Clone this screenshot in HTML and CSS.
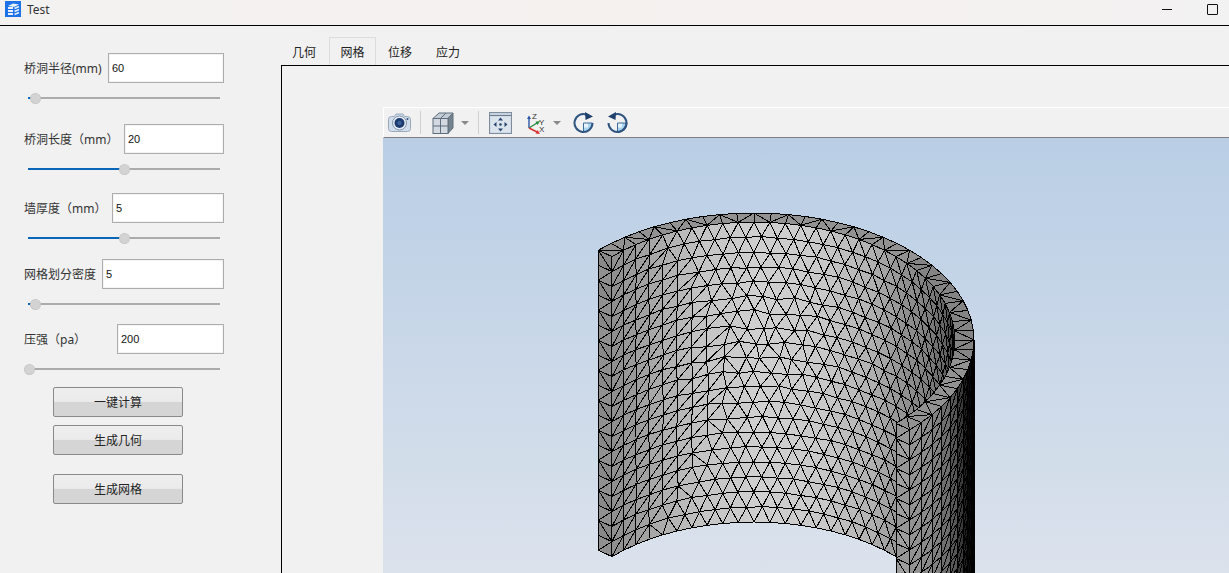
FILE: index.html
```html
<!DOCTYPE html>
<html lang="zh">
<head>
<meta charset="utf-8">
<title>Test</title>
<link rel="stylesheet" href="styles.css">
</head>
<body>
<div class="app">
  <header class="titlebar">
    <svg class="app-icon" viewBox="0 0 16 16">
      <rect width="16" height="16" fill="#1c72e6"/>
      <path d="M3 5 L8 2.5 L14 3.5 L9 6 Z M3 6 h5 v2 h-5 Z M3 9 h5 v2 h-5 Z M3 12 h5 v2 h-5 Z" fill="#e8f0fc"/>
      <path d="M9.5 7.5 L14 5.5 M9.5 10.5 L14 8.5 M9.5 13.5 L14 11.5" stroke="#e8f0fc" stroke-width="1.4" fill="none"/>
    </svg>
    <span class="app-title">Test</span>
    <span class="win-min"></span>
    <span class="win-max"></span>
  </header>
  <div class="workspace">
    <aside class="panel">
      <div class="field">
        <div class="field-row"><label>桥洞半径(mm)</label><input class="w116" value="60"></div>
        <div class="slider"><div class="fill" style="width:7px"><i class="thumb"></i></div></div>
      </div>
      <div class="field gap25">
        <div class="field-row"><label>桥洞长度（mm）</label><input class="w100" value="20"></div>
        <div class="slider"><div class="fill" style="width:96px"><i class="thumb"></i></div></div>
      </div>
      <div class="field gap23">
        <div class="field-row"><label>墙厚度（mm）</label><input class="w112" value="5"></div>
        <div class="slider"><div class="fill" style="width:96px"><i class="thumb"></i></div></div>
      </div>
      <div class="field gap20">
        <div class="field-row"><label>网格划分密度</label><input class="w122" value="5"></div>
        <div class="slider"><div class="fill" style="width:7px"><i class="thumb"></i></div></div>
      </div>
      <div class="field gap19">
        <div class="field-row"><label>压强（pa）</label><input class="w107" value="200"></div>
        <div class="slider"><div class="fill" style="width:1px"><i class="thumb"></i></div></div>
      </div>
      <div class="actions">
        <button>一键计算</button>
        <button class="btn-near">生成几何</button>
        <button class="btn-far">生成网格</button>
      </div>
    </aside>
    <main class="main">
      <nav class="tabs">
        <span class="tab">几何</span>
        <span class="tab tab-active">网格</span>
        <span class="tab">位移</span>
        <span class="tab">应力</span>
      </nav>
      <section class="pane">
        <div class="toolbar">
          <svg class="ic ic-camera" viewBox="0 0 23 19">
            <path d="M3.5 3.5 h3 l1.5 -2.5 h7 l1.5 2.5 h3 a3 3 0 0 1 3 3 v9 a3 3 0 0 1 -3 3 h-16 a3 3 0 0 1 -3 -3 v-9 a3 3 0 0 1 3 -3 Z" fill="#d3deec" stroke="#9aa8b9"/>
            <circle cx="11.5" cy="10" r="7" fill="#e8eef6" stroke="#8294ab"/>
            <circle cx="11.5" cy="10" r="5" fill="#1c3a6d"/>
            <circle cx="11.5" cy="10" r="2.2" fill="#3c5f98"/>
            <circle cx="19.5" cy="6" r="1" fill="#2c4f7a"/>
          </svg>
          <span class="sep sep-a"></span>
          <svg class="ic ic-cube" viewBox="0 0 22 22">
            <path d="M1 6.5 L7 1 H21 L16 6.5 Z" fill="#c3ccd6" stroke="#5f6e7c"/>
            <path d="M16 6.5 L21 1 V16 L16 21.5 Z" fill="#75838f" stroke="#5f6e7c"/>
            <rect x="1" y="6.5" width="15" height="15" fill="#d3d9e0" stroke="#5f6e7c"/>
            <path d="M8.5 6.5 V21.5 M1 14 H16 M8.5 6.5 L14 1" stroke="#5f6e7c" fill="none"/>
          </svg>
          <svg class="ic ic-tri tri-a" viewBox="0 0 8 4"><path d="M0 0 H8 L4 4 Z" fill="#8a8a8a"/></svg>
          <span class="sep sep-b"></span>
          <svg class="ic ic-fit" viewBox="0 0 23 22">
            <rect x="0.5" y="0.5" width="22" height="21" fill="#c6d2e0" stroke="#7e8c9c"/>
            <path d="M1 3.5 H22" stroke="#6e7d8e"/>
            <rect x="1.5" y="4.5" width="20" height="16" fill="#dbe3ed"/>
            <path d="M11.5 5.5 L14 8.5 H9 Z M11.5 19.5 L14 16.5 H9 Z M4.5 12.5 L7.5 10 V15 Z M18.5 12.5 L15.5 10 V15 Z" fill="#27466f"/>
            <circle cx="11.5" cy="12.5" r="1.3" fill="#27466f"/>
          </svg>
          <svg class="ic ic-axes" viewBox="0 0 18 22">
            <path d="M2 16 V6" stroke="#2c55a8" stroke-width="1.4"/>
            <path d="M2 3.5 L4 7 H0 Z" fill="#2c55a8"/>
            <path d="M2 16 L10 11" stroke="#1f8a3d" stroke-width="1.4"/>
            <path d="M13 9 L10.5 13 L8.5 9.8 Z" fill="#1f8a3d"/>
            <path d="M2 16 L10 20" stroke="#d83232" stroke-width="1.4"/>
            <path d="M13 22 L8.5 21.5 L10.5 18 Z" fill="#d83232"/>
            <text class="axis-label" x="5" y="7">Z</text>
            <text class="axis-label" x="12" y="13">Y</text>
            <text class="axis-label" x="12" y="20">X</text>
          </svg>
          <svg class="ic ic-tri tri-b" viewBox="0 0 8 4"><path d="M0 0 H8 L4 4 Z" fill="#8a8a8a"/></svg>
          <svg class="ic ic-rot rot-a" viewBox="0 0 21 21">
            <path d="M10.5 11 h9 a9 9 0 0 1 -9 9 Z" fill="#a9d5f0"/>
            <path d="M10.5 11 h4.5 v4.5 h-4.5 Z" fill="#e6f3fb"/>
            <path d="M19.5 11 H10.5 V20" stroke="#3c6a9a" stroke-width="1" fill="none"/>
            <path d="M19.5 11 A9 9 0 1 1 13.5 2.5" stroke="#2f5480" stroke-width="2" fill="none"/>
            <path d="M12 0 L20 4.5 L12.5 8 Z" fill="#1f3f6c"/>
          </svg>
          <svg class="ic ic-rot rot-b" viewBox="0 0 21 21">
            <path d="M10.5 11 h9 a9 9 0 0 1 -9 9 Z" fill="#a9d5f0"/>
            <path d="M10.5 11 h4.5 v4.5 h-4.5 Z" fill="#e6f3fb"/>
            <path d="M19.5 11 H10.5 V20" stroke="#3c6a9a" stroke-width="1" fill="none"/>
            <path d="M1.5 11 A9 9 0 1 0 7.5 2.5" stroke="#2f5480" stroke-width="2" fill="none"/>
            <path d="M19.5 11 A9 9 0 0 1 10.5 20" stroke="#2f5480" stroke-width="2" fill="none"/>
            <path d="M9 0 L1 4.5 L8.5 8 Z" fill="#1f3f6c"/>
          </svg>
        </div>
        <div class="viewer">
          <svg id="mesh" class="mesh" viewBox="383 138 846 435" width="846" height="435"></svg>
        </div>
      </section>
    </main>
  </div>
</div>
<script src="mesh.js"></script>
</body>
</html>
```

FILE: styles.css
```css
* { box-sizing: border-box; }
html, body { margin: 0; height: 100%; overflow: hidden; }
body {
  background: #f1f1f1;
  color: #222;
  font: 12px "Noto Sans", "Noto Sans CJK SC", "Liberation Sans", sans-serif;
}
.app { width: 1229px; height: 573px; display: flex; flex-direction: column; }

.titlebar {
  height: 26px;
  flex: none;
  display: flex;
  align-items: flex-start;
  background: linear-gradient(90deg, #f3f2f1, #f5f1ef 50%, #f3f2f2);
  border-bottom: 1px solid #000;
  padding-left: 5px;
}
.app-icon { width: 16px; height: 16px; margin-top: 1px; flex: none; }
.app-title { margin-left: 6px; line-height: 19px; color: #333; }
.win-min { width: 10px; height: 1px; background: #111; margin: 9px 0 0 auto; }
.win-max {
  width: 11px; height: 11px; margin: 4px 11px 0 35px;
  border: 1px solid #111; border-radius: 1px;
}

.workspace { flex: 1; display: flex; min-height: 0; }

.panel { width: 280px; flex: none; padding: 27px 0 0 24px; }
.field { width: 200px; }
.gap25 { margin-top: 25px; }
.gap23 { margin-top: 23px; }
.gap20 { margin-top: 20px; }
.gap19 { margin-top: 19px; }
.field-row { height: 30px; display: flex; align-items: center; justify-content: space-between; }
.field-row label { white-space: nowrap; color: #333; }
.field-row input {
  height: 30px;
  padding: 0 3px;
  border: 1px solid #adadad;
  outline: 1px solid #f4f4f4;
  outline-offset: -2px;
  background: #fff;
  color: #111;
  font: 11px "Liberation Sans", sans-serif;
  border-radius: 0;
}
.w116 { width: 116px; }
.w100 { width: 100px; }
.w112 { width: 112px; }
.w122 { width: 122px; }
.w107 { width: 107px; }

.slider { width: 192px; height: 2px; margin: 14px 0 0 4px; background: #ababab; }
.fill { position: relative; height: 2px; background: #0a66b8; }
.thumb {
  position: absolute;
  right: -5.5px;
  top: -4.5px;
  width: 11px;
  height: 11px;
  border-radius: 50%;
  background: #d3d3d3;
  border: 1px dotted #bdbdbd;
}

.actions { margin: 17px 0 0 29px; display: flex; flex-direction: column; align-items: flex-start; }
.actions button {
  width: 130px;
  height: 30px;
  padding: 0 0 2px;
  border: 1px solid #8a8a8a;
  border-radius: 2px;
  background: linear-gradient(180deg, #eeeeee 0, #ebebeb 48%, #d5d5d5 50%, #d5d5d5 100%);
  color: #222;
  font: 12px "Noto Sans CJK SC", sans-serif;
}
.actions .btn-near { margin-top: 8px; }
.actions .btn-far { margin-top: 19px; }

.main { flex: 1; min-width: 0; display: flex; flex-direction: column; }
.tabs { height: 39px; flex: none; padding-top: 11px; display: flex; }
.tab { width: 48px; height: 28px; text-align: center; line-height: 31px; color: #222; }
.tab-active {
  width: 47px;
  margin-left: 1px;
  border: 1px solid #dcdcdc;
  border-bottom: 0;
  line-height: 29px;
}
.pane {
  flex: 1;
  min-height: 0;
  margin-left: 1px;
  border-left: 1px solid #000;
  border-top: 1px solid #000;
  padding: 41px 0 0 101px;
  display: flex;
  flex-direction: column;
}
.toolbar {
  height: 31px;
  flex: none;
  display: flex;
  align-items: center;
  padding-left: 4px;
  background: #f1f1f1;
  border-top: 1px solid #fff;
  border-left: 1px solid #fff;
  border-bottom: 1px solid #808080;
}
.ic { display: block; flex: none; }
.ic-camera { width: 23px; height: 19px; }
.ic-cube { width: 22px; height: 22px; margin-left: 11px; }
.ic-tri { width: 8px; height: 4px; }
.tri-a { margin-left: 7px; }
.tri-b { margin-left: 8px; }
.ic-fit { width: 23px; height: 22px; margin-left: 10px; }
.ic-axes { width: 18px; height: 22px; margin-left: 15px; }
.ic-rot { width: 21px; height: 21px; }
.rot-a { margin-left: 12px; }
.rot-b { margin-left: 13px; }
.sep { width: 1px; height: 23px; background: #cfcfcf; flex: none; }
.sep-a { margin-left: 9px; }
.sep-b { margin-left: 9px; }
.axis-label { font: 8px "Liberation Sans", sans-serif; fill: #333; }

.viewer {
  flex: 1;
  min-height: 0;
  overflow: hidden;
  background: linear-gradient(180deg, #b9cee5 0, #dbe2ec 100%);
}
.mesh { display: block; }
.mesh polygon { stroke: #000; stroke-width: 1; stroke-linejoin: round; shape-rendering: crispEdges; }
```

FILE: mesh.js
```js
// Half-cylinder shell drawn as a shaded triangle mesh.
(function () {
  var svg = document.getElementById('mesh');
  var NS = 'http://www.w3.org/2000/svg';
  var CX = 754, CY = 340;
  var A = 220, B = 127;     // outer ellipse
  var AI = 201, BI = 118;   // inner ellipse
  var H = 300, ROWS = 20, STEP = 4.5;
  var RAD = Math.PI / 180;

  function gray(v) {
    v = Math.max(0, Math.min(255, Math.round(v)));
    return 'rgb(' + v + ',' + v + ',' + v + ')';
  }
  function lerpTable(t, x) {
    if (x <= t[0][0]) return t[0][1];
    for (var i = 1; i < t.length; i++) {
      if (x <= t[i][0]) {
        var f = (x - t[i - 1][0]) / (t[i][0] - t[i - 1][0]);
        return t[i - 1][1] + f * (t[i][1] - t[i - 1][1]);
      }
    }
    return t[t.length - 1][1];
  }
  function tri(a, b, c, fill) {
    var p = document.createElementNS(NS, 'polygon');
    p.setAttribute('points', [a, b, c].map(function (q) {
      return q[0].toFixed(1) + ',' + q[1].toFixed(1);
    }).join(' '));
    p.setAttribute('fill', fill);
    svg.appendChild(p);
  }
  function hash(i, k, s) {
    var v = Math.sin(i * 12.9898 + k * 78.233 + s) * 43758.5453;
    return v - Math.floor(v) - 0.5;
  }
  function smooth(e0, e1, x) {
    var t = Math.max(0, Math.min(1, (x - e0) / (e1 - e0)));
    return t * t * (3 - 2 * t);
  }

  var innerShade = [[611, 140], [650, 165], [700, 195], [760, 208], [820, 202], [870, 178], [900, 148], [930, 125], [945, 100], [955, 60]];
  var outerShade = [[910, 150], [925, 140], [940, 125], [952, 95], [962, 50], [970, 10], [975, 0]];

  // Inner surface: staggered triangles, regular quads with diagonals on the left.
  function staggerWeight(th, j) {
    var d = Math.abs(j - ROWS / 2) / (ROWS / 2);
    var t0 = 102 + 25 * d * d;
    return 1 - smooth(t0 - 8, t0, th);
  }
  function innerVertex(i, j) {
    var th = 135 - i * STEP;
    var w = staggerWeight(th, j);
    if (j % 2) th -= w * STEP / 2;
    if (th < 0) th = 0;
    var x = CX + AI * Math.cos(th * RAD);
    var z = j * H / ROWS;
    var y = CY - BI * Math.sin(th * RAD) + z;
    if (j > 0 && j < ROWS && i > 0) {
      var dx = (x - 760) / 70, dy = (y - 345) / 70;
      var amp = 0.9 + 5 * Math.exp(-(dx * dx + dy * dy));
      x += hash(i, j, 1) * amp;
      y += hash(i, j, 2) * amp;
    }
    return [x, y];
  }
  var cols = Math.round(135 / STEP);
  for (var j = 0; j < ROWS; j++) {
    for (var i = 0; i < cols; i++) {
      var a = innerVertex(i, j), b = innerVertex(i + 1, j);
      var c = innerVertex(i + 1, j + 1), d = innerVertex(i, j + 1);
      var w = staggerWeight(135 - (i + 0.5) * STEP, j + 0.5);
      var t1, t2;
      if (j % 2 && w > 0.4) { t1 = [a, c, d]; t2 = [a, b, c]; }
      else { t1 = [a, b, d]; t2 = [b, c, d]; }
      [t1, t2].forEach(function (t) {
        var mx = (t[0][0] + t[1][0] + t[2][0]) / 3;
        tri(t[0], t[1], t[2], gray(lerpTable(innerShade, mx)));
      });
    }
  }

  // Cut faces (a narrow strip of zig-zag triangles).
  function cutFace(th, baseGray) {
    var co = Math.cos(th * RAD), si = Math.sin(th * RAD);
    var ox = CX + A * co, oy = CY - B * si;
    var ix = CX + AI * co, iy = CY - BI * si;
    for (var r = 0; r < ROWS; r++) {
      var z0 = r * H / ROWS, z1 = (r + 1) * H / ROWS;
      var p = [ox, oy + z0], q = [ix, iy + z0], s = [ix, iy + z1], u = [ox, oy + z1];
      var f = gray(baseGray + 8 * (r % 2));
      if (r % 2) { tri(p, q, u, f); tri(q, s, u, f); }
      else { tri(p, q, s, f); tri(p, s, u, f); }
    }
  }
  cutFace(135, 136);
  cutFace(-45, 150);

  // Outer surface on the near right.
  for (var r = 0; r < ROWS + 1; r++) {
    for (var k = 0; k < 10; k++) {
      var th0 = -45 + k * STEP, th1 = th0 + STEP;
      var z0 = r * H / ROWS, z1 = (r + 1) * H / ROWS;
      var p0 = [CX + A * Math.cos(th0 * RAD), CY - B * Math.sin(th0 * RAD) + z0];
      var p1 = [CX + A * Math.cos(th1 * RAD), CY - B * Math.sin(th1 * RAD) + z0];
      var p2 = [p1[0], CY - B * Math.sin(th1 * RAD) + z1];
      var p3 = [p0[0], CY - B * Math.sin(th0 * RAD) + z1];
      var f = gray(lerpTable(outerShade, (p0[0] + p1[0]) / 2));
      tri(p0, p1, p3, f);
      tri(p1, p2, p3, f);
    }
  }

  // Top annulus.
  var n = Math.round(180 / STEP);
  for (var m = 0; m < n; m++) {
    var a0 = (135 - m * STEP) * RAD, a1 = (135 - (m + 1) * STEP) * RAD;
    var o0 = [CX + A * Math.cos(a0), CY - B * Math.sin(a0)];
    var o1 = [CX + A * Math.cos(a1), CY - B * Math.sin(a1)];
    var i0 = [CX + AI * Math.cos(a0), CY - BI * Math.sin(a0)];
    var i1 = [CX + AI * Math.cos(a1), CY - BI * Math.sin(a1)];
    var g = gray(m > 20 && m < 32 ? 132 : 146);
    if (m % 2) { tri(o0, o1, i0, g); tri(o1, i1, i0, g); }
    else { tri(o0, i1, i0, g); tri(o0, o1, i1, g); }
  }
})();
```
